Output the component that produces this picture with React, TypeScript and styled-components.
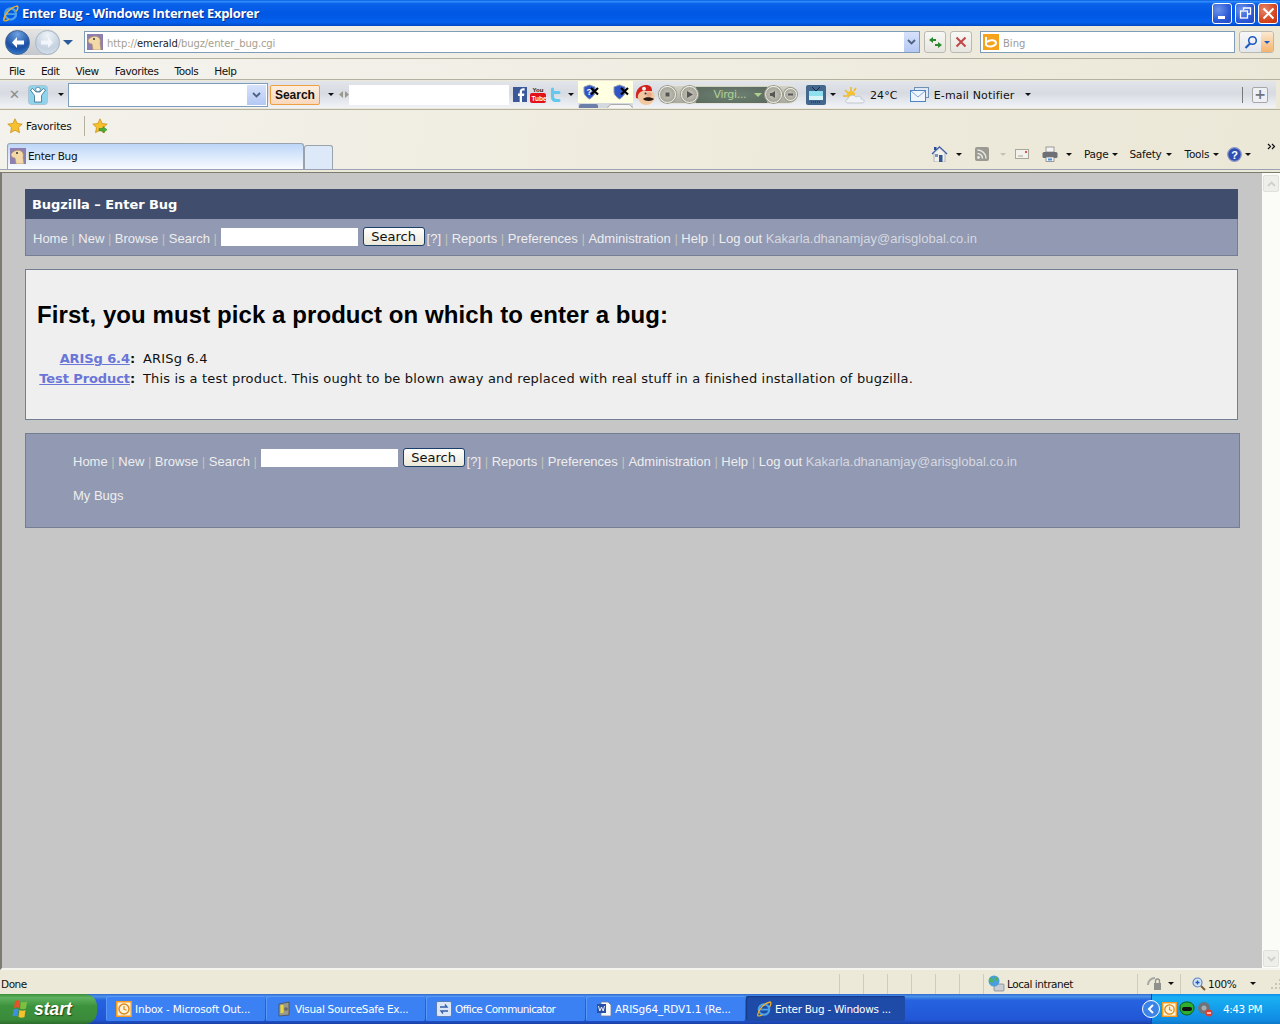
import styled, { createGlobalStyle } from "styled-components";

const GlobalStyle = createGlobalStyle`
  html, body {
    margin: 0;
    padding: 0;
    width: 1280px;
    height: 1024px;
    overflow: hidden;
    background: #c6c6c6;
    font-family: "DejaVu Sans", sans-serif;
  }
`;

const Frame = styled.div`
  width: 1280px;
  height: 1024px;
  display: flex;
  flex-direction: column;
  overflow: hidden;
`;

/* ---------- title bar ---------- */

const TitleBar = styled.div`
  height: 26px;
  flex: none;
  display: flex;
  align-items: center;
  padding: 0 1px 0 2px;
  background: linear-gradient(180deg, #0a5be0 0%, #2f8dfb 6%, #0a62ea 14%, #0057e3 55%, #0461ee 85%, #0049c4 100%);
  color: #fff;
`;

const TitleText = styled.span`
  margin-left: 3px;
  font: bold 13px/26px "Open Sans", "DejaVu Sans", sans-serif;
  letter-spacing: -0.3px;
  text-shadow: 1px 1px 0 #0a2f8c;
  flex: 1;
`;

const WinButton = styled.div<{ $close?: boolean }>`
  width: 18px;
  height: 19px;
  margin-left: 3px;
  margin-right: ${(p) => (p.$close ? "1px" : "0")};
  border: 1px solid #fff;
  border-radius: 3px;
  background: ${(p) =>
    p.$close
      ? "radial-gradient(circle at 30% 30%, #e5866b, #d4471f 60%, #c23010)"
      : "radial-gradient(circle at 30% 30%, #6c93ea, #2c5ad8 60%, #2349c0)"};
  display: flex;
  align-items: center;
  justify-content: center;
`;

/* ---------- address row ---------- */

const AddressRow = styled.div`
  height: 33px;
  flex: none;
  display: flex;
  align-items: center;
  padding-left: 5px;
  background: linear-gradient(90deg, #f3f2ec, #ece8d8);
  border-bottom: 1px solid #b5b1a0;
  box-sizing: border-box;
`;

const NavPill = styled.div`
  width: 55px;
  height: 26px;
  border-radius: 13px;
  background: linear-gradient(180deg, #e4e4e4, #c4c8cc);
  display: flex;
  align-items: center;
  justify-content: space-between;
`;

const RoundNav = styled.div<{ $off?: boolean }>`
  width: 25px;
  height: 25px;
  border-radius: 50%;
  border: 1px solid ${(p) => (p.$off ? "#a9b6c4" : "#47648f")};
  box-sizing: border-box;
  background: ${(p) =>
    p.$off
      ? "radial-gradient(circle at 50% 20%, #eef3f8, #c5d2e0 60%, #dde6ef)"
      : "radial-gradient(circle at 50% 15%, #6ea4e2, #1a4fa5 60%, #3c8ddc)"};
  display: flex;
  align-items: center;
  justify-content: center;
`;

const HistoryCaret = styled.span`
  flex: none;
  margin-left: 3px;
  width: 0;
  height: 0;
  border-left: 5px solid transparent;
  border-right: 5px solid transparent;
  border-top: 5px solid #2a5a9a;
`;

const AddressBox = styled.div`
  margin-left: 11px;
  width: 836px;
  height: 22px;
  box-sizing: border-box;
  border: 1px solid #7f9db9;
  background: #fff;
  display: flex;
  align-items: center;
  font: 10px "DejaVu Sans", sans-serif;
  color: #a5a08e;
  letter-spacing: -0.1px;
`;

const UrlText = styled.span`
  margin-left: 4px;
  padding-top: 2px;
  flex: 1;
  b {
    font-weight: normal;
    color: #222;
  }
`;

const ComboButton = styled.div<{ $wide?: boolean }>`
  width: ${(p) => (p.$wide ? "19px" : "15px")};
  height: 20px;
  background: linear-gradient(180deg, #d7e2fb, #b4c8f3);
  display: flex;
  align-items: center;
  justify-content: center;
  flex: none;
`;

const SmallTool = styled.div`
  margin-left: 4px;
  width: 20px;
  height: 20px;
  flex: none;
  border: 1px solid #b9b9b4;
  border-radius: 3px;
  background: linear-gradient(180deg, #f8f8f5, #e6e5df);
  display: flex;
  align-items: center;
  justify-content: center;
`;

const SearchBox = styled(AddressBox)`
  margin-left: 8px;
  width: 255px;
  color: #9a9a9a;
  letter-spacing: 0;
`;

const BingLabel = styled.span`
  padding-top: 2px;
`;

const BingTile = styled.div`
  width: 16px;
  height: 16px;
  margin-left: 2px;
  margin-right: 4px;
  background: #f7a21b;
  display: flex;
  align-items: center;
  justify-content: center;
`;

const GoPair = styled.div`
  margin-left: 4px;
  width: 33px;
  height: 20px;
  flex: none;
  border: 1px solid #b9b9b4;
  border-radius: 3px;
  display: flex;
  overflow: hidden;
`;

const GoPart = styled.div<{ $drop?: boolean }>`
  width: ${(p) => (p.$drop ? "12px" : "21px")};
  background: ${(p) =>
    p.$drop
      ? "linear-gradient(180deg, #fbe9d2, #f5b36c)"
      : "linear-gradient(180deg, #f8f8f8, #e3e6ec)"};
  display: flex;
  align-items: center;
  justify-content: center;
`;

const BlueCaret = styled.span`
  width: 0;
  height: 0;
  border-left: 3px solid transparent;
  border-right: 3px solid transparent;
  border-top: 3px solid #1f5ac2;
`;

/* ---------- menu and links ---------- */

const MenuRow = styled.div`
  height: 21px;
  flex: none;
  display: flex;
  align-items: center;
  padding: 3px 0 0 9px;
  gap: 16px;
  font: 10.5px "DejaVu Sans", sans-serif;
  letter-spacing: -0.42px;
  color: #111;
  background: linear-gradient(90deg, #f4f3ee, #ece8d8);
  border-bottom: 1px solid #b5b1a0;
  box-sizing: border-box;
`;

const LinksRow = styled.div`
  height: 30px;
  flex: none;
  box-sizing: border-box;
  padding: 1px 0;
  background: #ece9d8;
  border-bottom: 1px solid #b5b1a0;
`;

const LinksInner = styled.div`
  height: 27px;
  width: 1276px;
  display: flex;
  align-items: center;
  background: linear-gradient(180deg, #e2e5ea, #d7dbe1 45%, #f1f3f7);
  font: 11px "DejaVu Sans", sans-serif;
  color: #111;
`;

const Caret = styled.span<{ $ml?: number; $pale?: boolean }>`
  flex: none;
  display: inline-block;
  margin-left: ${(p) => p.$ml ?? 0}px;
  width: 0;
  height: 0;
  border-left: 3px solid transparent;
  border-right: 3px solid transparent;
  border-top: 3px solid ${(p) => (p.$pale ? "#c4c2b8" : "#111")};
`;

const GreenCaret = styled.span`
  flex: none;
  width: 0;
  height: 0;
  border-left: 4px solid transparent;
  border-right: 4px solid transparent;
  border-top: 4px solid #b0d090;
`;

const CloseMark = styled.span`
  margin-left: 9px;
  font: bold 13px "DejaVu Sans", sans-serif;
  color: #8a8a8a;
`;

const IconSlot = styled.div<{ $ml: number }>`
  flex: none;
  margin-left: ${(p) => p.$ml}px;
  display: flex;
`;

const ToolInput = styled.div`
  margin-left: 4px;
  width: 200px;
  height: 24px;
  flex: none;
  box-sizing: border-box;
  border: 1px solid #7f9db9;
  background: #fff;
  display: flex;
  justify-content: flex-end;
  align-items: center;
  padding-right: 1px;
`;

const OrangeSearch = styled.div`
  margin-left: 2px;
  width: 50px;
  height: 20px;
  flex: none;
  box-sizing: border-box;
  border: 1px solid #f0a040;
  border-radius: 2px;
  background: linear-gradient(180deg, #fdeee0, #f9d8bd);
  font: bold 12px/18px "Liberation Sans", sans-serif;
  text-align: center;
  color: #111;
`;

const BlankField = styled.div`
  width: 160px;
  height: 20px;
  flex: none;
  background: #fff;
`;

const PaleBlock = styled.div`
  margin-left: 4px;
  width: 55px;
  height: 27px;
  flex: none;
  display: flex;
  flex-direction: column;
`;

const PaleTop = styled.div`
  height: 22px;
  flex: none;
  background: #ffffe1;
  display: flex;
  align-items: center;
  padding-left: 5px;
  gap: 13px;
`;

const PaleBottom = styled.div`
  flex: 1;
  background: #d5d9e0;
  overflow: hidden;
  display: flex;
  padding: 1px 0 0 1px;
  gap: 9px;
`;

const PaleStubBlue = styled.div`
  width: 20px;
  height: 8px;
  background: #6b7fa8;
  border-radius: 2px;
`;

const PaleStubWhite = styled.div`
  width: 24px;
  height: 8px;
  background: #f6f6f6;
  border: 1px solid #aaa;
  border-radius: 5px;
`;

const Player = styled.div`
  margin-left: 3px;
  width: 140px;
  height: 19px;
  flex: none;
  border-radius: 10px;
  background: linear-gradient(180deg, #d2d3c8, #a9aa9d);
  border: 1px solid #e4e4dc;
  box-sizing: border-box;
  display: flex;
  align-items: center;
  font: 11px "DejaVu Sans", sans-serif;
  color: #b0d090;
`;

const PlayerKnob = styled.div<{ $ml?: number; $small?: boolean }>`
  flex: none;
  z-index: 1;
  margin-left: ${(p) => p.$ml ?? 0}px;
  width: ${(p) => (p.$small ? 13 : 17)}px;
  height: ${(p) => (p.$small ? 13 : 17)}px;
  box-sizing: border-box;
  border-radius: 50%;
  border: 1px solid #f2f2ec;
  box-shadow: 0 0 0 1px #9a9a8c;
  background: radial-gradient(circle, #c9c8bb, #96958a);
  display: flex;
  align-items: center;
  justify-content: center;
`;

const PlayerTitle = styled.div`
  flex: none;
  width: 71px;
  height: 16px;
  box-sizing: border-box;
  padding-left: 13px;
  margin: 0 -2px;
  background: radial-gradient(ellipse at center, #6f8174, #5a6a5e);
  display: flex;
  align-items: center;
  justify-content: center;
  line-height: 16px;
  gap: 8px;
  letter-spacing: -0.3px;
`;

const LinkLabel = styled.span<{ $ml: number }>`
  flex: none;
  margin-left: ${(p) => p.$ml}px;
  padding-top: 1px;
  white-space: nowrap;
  letter-spacing: 0.15px;
`;

const Spring = styled.div`
  flex: 1;
`;

const PlusButton = styled.div`
  width: 14px;
  height: 14px;
  margin: 0 8px 0 9px;
  border: 1px solid #a7a7a7;
  border-radius: 2px;
  background: #eef0f4;
  color: #6e7480;
  font: bold 14px/13px "DejaVu Sans", sans-serif;
  text-align: center;
`;

const VRule = styled.div`
  width: 1px;
  height: 16px;
  background: #777;
`;

/* ---------- favorites + tabs ---------- */

const FavArea = styled.div`
  height: 63px;
  flex: none;
  box-sizing: border-box;
  background: linear-gradient(100deg, #f3f2ec, #eeeadb 60%, #ece8d8);
  display: flex;
  flex-direction: column;
`;

const FavRow = styled.div`
  height: 33px;
  flex: none;
  box-sizing: border-box;
  padding: 0 0 2px 7px;
  display: flex;
  align-items: center;
  font: 10.5px "DejaVu Sans", sans-serif;
  letter-spacing: -0.2px;
  color: #111;
`;

const FavLabel = styled.span`
  margin-left: 3px;
`;

const FavRule = styled.div`
  width: 1px;
  height: 20px;
  background: #b5b1a0;
  margin: 0 7px 0 12px;
`;

const TabRow = styled.div`
  height: 26px;
  flex: none;
  display: flex;
  align-items: flex-end;
  padding-left: 7px;
  font: 10.5px "DejaVu Sans", sans-serif;
  letter-spacing: -0.3px;
  color: #111;
`;

const TabFoot = styled.div`
  flex: 1;
  border-top: 1px solid #9aa3b5;
  border-bottom: 1px solid #7d7a70;
  background: #ece9d8;
`;

const Tab = styled.div`
  width: 297px;
  height: 26px;
  flex: none;
  box-sizing: border-box;
  border: 1px solid #9aa3ad;
  border-bottom: 0;
  border-radius: 3px 3px 0 0;
  background: linear-gradient(180deg, #bcd6f8, #dbe9fb 50%, #f9fbff);
  display: flex;
  align-items: center;
  padding: 0 0 2px 2px;
  gap: 2px;
`;

const NewTab = styled.div`
  width: 29px;
  height: 24px;
  flex: none;
  box-sizing: border-box;
  border: 1px solid #9aa3ad;
  border-bottom: 0;
  border-radius: 3px 3px 0 0;
  background: #dde9f8;
`;

const CmdBar = styled.div`
  flex: 1;
  height: 26px;
  display: flex;
  align-items: center;
  padding-bottom: 4px;
  box-sizing: border-box;
  letter-spacing: -0.25px;
`;

const CmdLabel = styled.span<{ $ml: number }>`
  margin-left: ${(p) => p.$ml}px;
  margin-right: 4px;
  white-space: nowrap;
`;

const Chevrons = styled.div`
  flex: none;
  margin-left: 16px;
  margin-bottom: 16px;
  display: flex;
`;

/* ---------- page ---------- */

const Viewport = styled.div`
  height: 797px;
  flex: none;
  display: flex;
  background: #c6c6c6;
  border-left: 2px solid #7d7a70;
  border-bottom: 2px solid #f5f4ee;
  box-sizing: border-box;
`;

const Page = styled.div`
  flex: 1;
  padding: 16px 0 0 23px;
  font: 13px "Liberation Sans", sans-serif;
`;

const Banner = styled.div`
  width: 1213px;
  height: 30px;
  box-sizing: border-box;
  background: #404d6c;
  color: #fff;
  padding-left: 7px;
  font: bold 13px/31px "DejaVu Sans", sans-serif;
  letter-spacing: -0.05px;
`;

const NavBox = styled.div`
  width: 1213px;
  height: 37px;
  box-sizing: border-box;
  background: #9199b3;
  border: solid #747e93;
  border-width: 0 1px 1px 1px;
  padding: 8px 0 0 7px;
  white-space: nowrap;
  color: #eee;
`;

const NavText = styled.span`
  color: #eee;
`;

const Sep = styled.span`
  color: #c0c4b8;
  margin: 0 3.6px;
`;

const QuickInput = styled.span<{ $drop: number }>`
  display: inline-block;
  width: 137px;
  height: 18px;
  background: #fff;
  vertical-align: ${(p) => -p.$drop}px;
`;

const QuickButton = styled.span<{ $drop: number }>`
  display: inline-block;
  overflow: hidden;
  width: 62px;
  height: 19px;
  box-sizing: border-box;
  margin-left: 5px;
  margin-right: 2px;
  border: 1px solid #1c3f68;
  border-radius: 3px;
  background: linear-gradient(180deg, #fff, #ece9d8);
  color: #111;
  font: 13px/18px "DejaVu Sans", sans-serif;
  text-align: center;
  vertical-align: ${(p) => -p.$drop}px;
`;

const Mail = styled.span`
  color: #d6d8df;
`;

const ContentBox = styled.div`
  width: 1213px;
  height: 151px;
  margin-top: 13px;
  box-sizing: border-box;
  background: #efefef;
  border: 1px solid #747e93;
  padding: 30px 0 0 11px;
`;

const Heading = styled.h2`
  margin: 0;
  font: bold 24px/30px "Liberation Sans", sans-serif;
  letter-spacing: 0.08px;
  color: #000;
`;

const ProductList = styled.div`
  margin-top: 19px;
  display: grid;
  grid-template-columns: 97px auto;
  column-gap: 8px;
  justify-content: start;
  margin-left: 1px;
  font: 13px/20px "DejaVu Sans", sans-serif;
  color: #111;
`;

const ProductName = styled.div`
  font-weight: bold;
  text-align: right;
  white-space: nowrap;
  letter-spacing: -0.1px;
`;

const ProductText = styled.div`
  letter-spacing: 0.17px;
  white-space: nowrap;
`;

const ProductLink = styled.a`
  color: #6a75d8;
  text-decoration: underline;
`;

const FooterBox = styled.div`
  width: 1215px;
  height: 95px;
  margin-top: 13px;
  box-sizing: border-box;
  background: #9199b3;
  border: 1px solid #747e93;
  padding: 14px 0 0 47px;
  white-space: nowrap;
  color: #eee;
`;

const FooterLine = styled.div`
  height: 26px;
`;

const MyBugs = styled.div`
  margin-top: 14px;
  line-height: 16px;
  color: #eee;
`;

const Scrollbar = styled.div`
  width: 18px;
  flex: none;
  background: #fbfbf8;
  display: flex;
  flex-direction: column;
  justify-content: space-between;
`;

const ScrollButton = styled.div`
  height: 15px;
  margin: 2px 1px 1px;
  border: 1px solid #e0e0dc;
  border-radius: 2px;
  background: #eeeeea;
  display: flex;
  align-items: center;
  justify-content: center;
`;

/* ---------- status + taskbar ---------- */

const StatusBar = styled.div`
  height: 24px;
  flex: none;
  box-sizing: border-box;
  display: flex;
  align-items: center;
  background: #ece9d8;
  font: 10.5px "DejaVu Sans", sans-serif;
  letter-spacing: -0.45px;
  color: #111;
  padding: 3px 0 0 1px;
`;

const StatusCell = styled.div<{ $w: number }>`
  flex: none;
  width: ${(p) => p.$w}px;
  height: 20px;
  box-sizing: border-box;
  border-left: 1px solid #cfccbb;
  display: flex;
  align-items: center;
  gap: 2px;
`;

const StatusDone = styled.div`
  width: 838px;
  flex: none;
`;

const Taskbar = styled.div`
  flex: 1;
  display: flex;
  align-items: stretch;
  background: linear-gradient(180deg, #3168d5 0, #4993e6 8%, #2663e0 20%, #2157d7 85%, #1941a5 100%);
  font: 10.5px "DejaVu Sans", sans-serif;
  color: #fff;
`;

const StartButton = styled.div`
  width: 97px;
  flex: none;
  box-sizing: border-box;
  padding-left: 11px;
  border-radius: 0 12px 12px 0;
  background: linear-gradient(180deg, #388e38 0, #5fb15f 12%, #3d933d 40%, #3a8a3a 85%, #2c6c2c 100%);
  display: flex;
  align-items: center;
  gap: 5px;
  font: italic bold 17.5px "Liberation Sans", sans-serif;
  text-shadow: 1px 1px 1px #1b4d1b;
`;

const TaskList = styled.div`
  flex: 1;
  display: flex;
  padding: 2px 0 2px 9px;
  gap: 1px;
`;

const TaskButton = styled.div<{ $active?: boolean; $ls?: number }>`
  width: 159px;
  height: 25px;
  flex: none;
  box-sizing: border-box;
  padding-left: 10px;
  border-radius: 2px;
  letter-spacing: ${(p) => p.$ls ?? -0.17}px;
  background: ${(p) => (p.$active ? "#1e4aa8" : "#3c81f3")};
  box-shadow: ${(p) => (p.$active ? "inset 1px 1px 1px #163a85" : "inset 1px 1px 0 #5a98f5")};
  display: flex;
  align-items: center;
  gap: 3px;
  white-space: nowrap;
`;

const Tray = styled.div`
  width: 129px;
  flex: none;
  box-sizing: border-box;
  background: linear-gradient(180deg, #0f8cea 0, #19b0f2 10%, #0f8ce4 85%, #0d78c8 100%);
  border-left: 1px solid #0a4ea8;
  display: flex;
  align-items: center;
  gap: 2px;
`;

const Clock = styled.span`
  margin-left: 8px;
  letter-spacing: -0.45px;
`;

const TrayArrow = styled.div`
  margin-left: -10px;
  width: 18px;
  height: 18px;
  flex: none;
  border-radius: 50%;
  border: 1px solid #fff;
  box-sizing: border-box;
  background: #3b83e6;
  display: flex;
  align-items: center;
  justify-content: center;
`;

/* ---------- drawings ---------- */

const IeLogo = ({ s = 16 }: { s?: number }) => (
  <svg width={s} height={s} viewBox="0 0 16 16">
    <ellipse cx="8" cy="8.5" rx="5.2" ry="5.2" fill="none" stroke="#4aa3e8" strokeWidth="2.2" />
    <path d="M4.5 8.6h8" stroke="#4aa3e8" strokeWidth="1.8" />
    <path d="M1.5 14.5C2 9 8 2 14 1c1.5 0 1 3-.5 5" fill="none" stroke="#f2b02c" strokeWidth="1.3" />
    <path d="M1.5 14.5c1 1 3 .3 5-1" fill="none" stroke="#f2b02c" strokeWidth="1.2" />
  </svg>
);

const DinoIcon = ({ s = 16 }: { s?: number }) => (
  <svg width={s} height={s} viewBox="0 0 16 16">
    <rect width="16" height="16" fill="#8f7fb0" />
    <path d="M1 6c2-3 7-5 10-3 2 1 3 4 2 6l1 7H6l-1-6C3 10 1 9 1 6z" fill="#f3d8a8" stroke="#a98c5f" strokeWidth="0.6" />
    <circle cx="7" cy="5" r="1" fill="#333" />
  </svg>
);

const ArrowIcon = ({ color, flip }: { color: string; flip?: boolean }) => (
  <svg width="15" height="13" viewBox="0 0 15 13">
    <path d={flip ? "M8 1l5 5.500L8 12V8.500H1v-4h7z" : "M7 1 2 6.500 7 12V8.500h7v-4H7z"} fill={color} />
  </svg>
);

const Chevron = ({ color = "#4d6185" }: { color?: string }) => (
  <svg width="9" height="6" viewBox="0 0 9 6">
    <path d="M1 1l3.500 3.500L8 1" fill="none" stroke={color} strokeWidth="1.8" />
  </svg>
);

const ChevronUp = ({ color }: { color: string }) => (
  <svg width="9" height="6" viewBox="0 0 9 6">
    <path d="M1 5l3.500-3.500L8 5" fill="none" stroke={color} strokeWidth="1.8" />
  </svg>
);

const Star = ({ arrow }: { arrow?: boolean }) => (
  <svg width="16" height="16" viewBox="0 0 16 16">
    <path d="M8 .8l2.200 4.700 5 .6-3.700 3.500 1 5.100L8 12.200l-4.500 2.500 1-5.100L.8 6.100l5-.6z" fill="#f6c02e" stroke="#c88a12" strokeWidth="0.7" />
    {arrow && <path d="M7 10.500h4V8.500l4 3.200-4 3.200v-2H7z" fill="#49b23a" stroke="#2b7d22" strokeWidth="0.5" />}
  </svg>
);

const ShieldX = ({ q }: { q?: boolean }) => (
  <svg width="17" height="17" viewBox="0 0 17 17">
    <path d="M1 3l5.500-2L12 3v5c0 3-3 5.500-5.500 7C4 13.500 1 11 1 8z" fill="#2f56c6" stroke="#8c97b4" strokeWidth="1" />
    {q && <text x="3.500" y="11" fontSize="9" fontWeight="bold" fill="#fff" fontFamily="Liberation Sans">?</text>}
    <path d="M8 4l7 6.500M15 4l-7 6.500" stroke="#000" strokeWidth="2.200" />
  </svg>
);

const Mario = () => (
  <svg width="20" height="20" viewBox="0 0 20 20">
    <path d="M1 13C0 5 5 0 11 0c4 0 6 2 6 6l-9 1-3 7z" fill="#d3211d" />
    <circle cx="9" cy="3.800" r="2" fill="#f2f2f2" />
    <path d="M3 13c-1-3 2-7 5-7h8c3 1 4 4 3.500 7-.7 4-4 7-8.500 7-4 0-7-3-8-7z" fill="#f2c8a0" />
    <path d="M8 14c2-2.500 8-2.500 11 0-2 2.500-9 2.500-11 0z" fill="#2b1a10" />
    <ellipse cx="14" cy="9.500" rx="2.700" ry="2.200" fill="#e8a888" />
    <circle cx="10.500" cy="8.500" r="1" fill="#203050" />
  </svg>
);

const Dim = ({ d, fill = "#555" }: { d: string; fill?: string }) => (
  <svg width="9" height="9" viewBox="0 0 9 9">
    <path d={d} fill={fill} />
  </svg>
);

const TvIcon = () => (
  <svg width="20" height="20" viewBox="0 0 20 20">
    <rect width="20" height="20" rx="2" fill="#44688d" />
    <path d="M6 2l4 4 4-4" fill="none" stroke="#12283f" strokeWidth="1" />
    <rect x="3" y="6" width="14" height="9" fill="#8fe0ee" />
    <rect x="3" y="11" width="14" height="4" fill="#d6f4f7" />
    <path d="M5 17h10" stroke="#12283f" strokeDasharray="1 1" />
  </svg>
);

const Weather = () => (
  <svg width="23" height="18" viewBox="0 0 23 18">
    <g stroke="#f2b61e" strokeWidth="1.400">
      <path d="M8 1v4M2 4l3 3M0 10h4M13 2l-2 3" />
    </g>
    <circle cx="8" cy="9" r="4" fill="#f7c12b" />
    <path d="M5 17c-3 0-3-4 0-4 0-4 6-5 8-2 3-2 6 0 5 2 4 0 4 4 1 4z" fill="#eef2f6" stroke="#b7bec8" strokeWidth="0.8" />
  </svg>
);

const MailIcon = () => (
  <svg width="19" height="15" viewBox="0 0 19 15">
    <rect x="4.500" y="0.500" width="14" height="10" fill="#dfe9f6" stroke="#6f8fb3" />
    <rect x="0.500" y="3.500" width="15" height="11" fill="#eef5fc" stroke="#4e84c2" />
    <path d="M1 4l7 6 7-6" fill="none" stroke="#7fa8d6" />
  </svg>
);

const HomeIcon = () => (
  <svg width="17" height="16" viewBox="0 0 17 16">
    <path d="M1 8l7.500-7L16 8" fill="none" stroke="#3b5fa8" strokeWidth="1.500" />
    <path d="M3 7l5.500-5L14 7v9H3z" fill="#f1f1ea" stroke="#8b95a8" strokeWidth="0.6" />
    <rect x="8" y="9" width="3.500" height="7" fill="#35568f" />
    <rect x="4" y="8" width="3" height="3" fill="#7a94c0" />
    <rect x="3" y="1" width="2.500" height="3" fill="#2d4a9a" />
  </svg>
);

const RssIcon = () => (
  <svg width="14" height="14" viewBox="0 0 14 14">
    <rect width="14" height="14" rx="2" fill="#9a9a92" />
    <circle cx="3.500" cy="10.500" r="1.400" fill="#e8e8e4" />
    <path d="M2.500 6.500a5 5 0 0 1 5 5M2.500 3a8.500 8.500 0 0 1 8.500 8.500" fill="none" stroke="#e8e8e4" strokeWidth="1.500" />
  </svg>
);

const Envelope = () => (
  <svg width="14" height="10" viewBox="0 0 14 10">
    <rect x="0.500" y="0.500" width="13" height="9" fill="#f2f1ec" stroke="#a8a69c" />
    <rect x="10" y="2" width="2" height="2" fill="#d9534f" />
    <path d="M3 7h5" stroke="#a8a69c" />
  </svg>
);

const Printer = () => (
  <svg width="16" height="16" viewBox="0 0 16 16">
    <rect x="4" y="1" width="8" height="5" fill="#f4f4f4" stroke="#777" strokeWidth="0.7" />
    <rect x="0.500" y="6" width="15" height="6" rx="1.500" fill="#6c6f75" />
    <rect x="4" y="11" width="8" height="4.500" fill="#f4f4f4" stroke="#777" strokeWidth="0.7" />
    <rect x="6" y="12.500" width="4" height="2" fill="#4a90d9" />
  </svg>
);

const HelpIcon = () => (
  <svg width="15" height="15" viewBox="0 0 15 15">
    <circle cx="7.500" cy="7.500" r="6.800" fill="#2f4fb5" stroke="#8b98c2" strokeWidth="1.200" />
    <text x="7.500" y="11.500" textAnchor="middle" fontSize="11" fontWeight="bold" fill="#fff" fontFamily="Liberation Sans">?</text>
  </svg>
);

const WinFlag = () => (
  <svg width="18" height="18" viewBox="0 0 18 18">
    <path d="M4 1c2-1 3-1 5 0L8 8C6 7 5 7 3 8z" fill="#e8502a" />
    <path d="M10 1.500c2 1 3 1 6 0l-1 7c-2 1-4 1-6 0z" fill="#7fbf3f" />
    <path d="M2.500 9.500c2-1 3-1 5 0l-1 7c-2-1-3-1-5 0z" fill="#3f8fe0" />
    <path d="M8.500 10c2 1 4 1 6 0l-1 7c-2 1-4 1-6 0z" fill="#f6c02e" />
  </svg>
);

const OutlookIcon = ({ s = 16 }: { s?: number }) => (
  <svg width={s} height={s} viewBox="0 0 16 16">
    <rect width="16" height="16" fill="#f39a1f" />
    <rect x="1.500" y="1.500" width="13" height="13" fill="#fdf3d8" />
    <circle cx="8" cy="8" r="5" fill="none" stroke="#d98a1c" strokeWidth="1.400" />
    <path d="M8 5v3.200l2.500 1" fill="none" stroke="#d98a1c" strokeWidth="1.200" />
  </svg>
);

const SafeIcon = () => (
  <svg width="16" height="16" viewBox="0 0 16 16">
    <path d="M3 3l10-2v13L3 15z" fill="#9a9a8c" stroke="#444" strokeWidth="0.7" />
    <rect x="4.500" y="4" width="3" height="8" fill="#e8d83c" />
    <circle cx="10" cy="8" r="1.800" fill="#666" />
  </svg>
);

const CommIcon = () => (
  <svg width="16" height="16" viewBox="0 0 16 16">
    <rect x="0.500" y="0.500" width="15" height="15" rx="1.500" fill="#dbe6f6" stroke="#5e7fb8" />
    <path d="M4 6h7l-2-2.500M12 10H5l2 2.500" fill="none" stroke="#345ea8" strokeWidth="1.300" />
  </svg>
);

const WordIcon = () => (
  <svg width="16" height="16" viewBox="0 0 16 16">
    <path d="M5 1h7l3 3v11H5z" fill="#f7f9fc" stroke="#6d7d95" strokeWidth="0.8" />
    <rect x="1" y="3" width="9" height="9" fill="#2b4fa3" />
    <path d="M2.500 5l1.300 5L5.500 6l1.700 4 1.300-5" fill="none" stroke="#fff" strokeWidth="0.9" />
  </svg>
);

const GlobeIcon = () => (
  <svg width="18" height="17" viewBox="0 0 18 17">
    <rect x="7" y="9" width="10" height="7" rx="1" fill="#c9ccd2" stroke="#666d78" strokeWidth="0.6" />
    <circle cx="7" cy="6" r="5.500" fill="#4a9ede" />
    <path d="M3 3c2 0 3 1 3 3s-2 2-3 1zM8 1c2 1 3 3 2 5-2 0-3-2-2-5z" fill="#4fb54f" />
  </svg>
);

const MiniLock = () => (
  <svg width="17" height="15" viewBox="0 0 17 15">
    <path d="M1 9c0-4 3-7 7-7" fill="none" stroke="#a7a9a4" strokeWidth="2" />
    <rect x="7" y="7" width="7" height="7" fill="#8f918c" />
    <path d="M8.500 7V5a2 2 0 0 1 4 0v2" fill="none" stroke="#8f918c" strokeWidth="1.300" />
  </svg>
);

const ZoomIcon = () => (
  <svg width="14" height="14" viewBox="0 0 14 14">
    <circle cx="5.500" cy="5.500" r="4.500" fill="#cfe3fa" stroke="#5f86c2" strokeWidth="1.200" />
    <path d="M3.500 5.500h4M5.500 3.500v4" stroke="#2356b6" strokeWidth="1.300" />
    <path d="M9 9l4 4" stroke="#7a5b2c" strokeWidth="2" />
  </svg>
);

const Grip = () => (
  <svg width="11" height="11" viewBox="0 0 11 11">
    <path d="M8 1h2v2H8zM4 5h2v2H4zM8 5h2v2H8zM0 9h2v2H0zM4 9h2v2H4zM8 9h2v2H8z" fill="#c8c5b4" />
  </svg>
);

const NavLinks = ({ drop }: { drop: number }) => (
  <>
    <NavText>Home</NavText><Sep>|</Sep>
    <NavText>New</NavText><Sep>|</Sep>
    <NavText>Browse</NavText><Sep>|</Sep>
    <NavText>Search</NavText><Sep>|</Sep>
    <QuickInput $drop={drop} />
    <QuickButton $drop={drop}>Search</QuickButton>
    <NavText>[?]</NavText><Sep>|</Sep>
    <NavText>Reports</NavText><Sep>|</Sep>
    <NavText>Preferences</NavText><Sep>|</Sep>
    <NavText>Administration</NavText><Sep>|</Sep>
    <NavText>Help</NavText><Sep>|</Sep>
    <NavText>Log out</NavText> <Mail>Kakarla.dhanamjay@arisglobal.co.in</Mail>
  </>
);

export default function App() {
  return (
    <Frame>
      <GlobalStyle />

      <TitleBar>
        <IeLogo s={17} />
        <TitleText>Enter Bug - Windows Internet Explorer</TitleText>
        <WinButton>
          <svg width="11" height="11" viewBox="0 0 11 11"><rect x="1" y="8" width="7" height="3" fill="#fff" /></svg>
        </WinButton>
        <WinButton>
          <svg width="13" height="13" viewBox="0 0 13 13">
            <path d="M4.500 3V1h7v6H9" fill="none" stroke="#fff" strokeWidth="1.300" />
            <rect x="1.500" y="4" width="7" height="7" fill="none" stroke="#fff" strokeWidth="1.300" />
          </svg>
        </WinButton>
        <WinButton $close>
          <svg width="13" height="13" viewBox="0 0 13 13"><path d="M1.500 1.500l10 10M11.500 1.500l-10 10" stroke="#fff" strokeWidth="2" /></svg>
        </WinButton>
      </TitleBar>

      <AddressRow>
        <NavPill>
          <RoundNav><ArrowIcon color="#fff" /></RoundNav>
          <RoundNav $off><ArrowIcon color="#f2f6fb" flip /></RoundNav>
        </NavPill>
        <HistoryCaret />
        <AddressBox>
          <IconSlot $ml={2}><DinoIcon /></IconSlot>
          <UrlText>http://<b>emerald</b>/bugz/enter_bug.cgi</UrlText>
          <ComboButton><Chevron /></ComboButton>
        </AddressBox>
        <SmallTool>
          <svg width="15" height="13" viewBox="0 0 15 13">
            <path d="M1 4l4-3v2h3v2H5v2zM14 9l-4 3v-2H7V8h3V6z" fill="#2c8a2c" />
          </svg>
        </SmallTool>
        <SmallTool>
          <svg width="12" height="12" viewBox="0 0 12 12"><path d="M1.500 1.500l9 9M10.500 1.500l-9 9" stroke="#c2474a" strokeWidth="2" /></svg>
        </SmallTool>
        <SearchBox>
          <BingTile>
            <svg width="14" height="12" viewBox="0 0 14 12">
              <path d="M2 1v8c3 3 10 1 10-2S6 3 3 6" fill="none" stroke="#fff" strokeWidth="2" />
            </svg>
          </BingTile>
          <BingLabel>Bing</BingLabel>
        </SearchBox>
        <GoPair>
          <GoPart>
            <svg width="14" height="14" viewBox="0 0 14 14">
              <circle cx="8.500" cy="5.500" r="3.800" fill="none" stroke="#1f5ac2" strokeWidth="1.600" />
              <path d="M6 8.500L1.500 13" stroke="#1f5ac2" strokeWidth="2.200" />
            </svg>
          </GoPart>
          <GoPart $drop><BlueCaret /></GoPart>
        </GoPair>
      </AddressRow>

      <MenuRow>
        <span>File</span><span>Edit</span><span>View</span><span>Favorites</span><span>Tools</span><span>Help</span>
      </MenuRow>

      <LinksRow>
        <LinksInner>
          <CloseMark>✕</CloseMark>
          <IconSlot $ml={8}>
            <svg width="20" height="20" viewBox="0 0 20 20">
              <rect x="0.500" y="0.500" width="19" height="19" rx="3" fill="#8fd4ec" stroke="#a9c4d2" />
              <circle cx="10" cy="4.500" r="2.300" fill="#fff" stroke="#2a5a7a" strokeWidth="0.6" />
              <path d="M2.500 5l2-1.500L8 7h4l3.500-3.500 2 1.500-4 5.500V17H6.500v-6.500z" fill="#fff" stroke="#2a5a7a" strokeWidth="0.7" />
            </svg>
          </IconSlot>
          <Caret $ml={10} />
          <ToolInput>
            <ComboButton $wide><Chevron /></ComboButton>
          </ToolInput>
          <OrangeSearch>Search</OrangeSearch>
          <Caret $ml={8} />
          <svg width="10" height="13" viewBox="0 0 10 13" style={{ marginLeft: 5, flex: "none" }}>
            <path d="M0 6.500L4 3v7zM10 6.500L6 3v7z" fill="#9a9a8c" />
          </svg>
          <BlankField />
          <IconSlot $ml={4}>
            <svg width="14" height="15" viewBox="0 0 14 15">
              <rect width="14" height="15" fill="#3b5998" />
              <path d="M9 15V9h2l.4-2.500H9V5c0-1 .4-1.400 1.400-1.400h1.200V1.300C10 1 7 .8 6.700 4.500v2H5V9h1.700v6z" fill="#fff" />
            </svg>
          </IconSlot>
          <IconSlot $ml={3}>
            <svg width="16" height="17" viewBox="0 0 16 17">
              <text x="2.500" y="6" fontSize="6" fontWeight="bold" fill="#222" fontFamily="Liberation Sans">You</text>
              <rect y="7" width="16" height="10" rx="2" fill="#e3101a" />
              <text x="1.500" y="14.500" fontSize="6.500" fontWeight="bold" fill="#fff" fontFamily="Liberation Sans">Tube</text>
            </svg>
          </IconSlot>
          <IconSlot $ml={3}>
            <svg width="13" height="16" viewBox="0 0 13 16">
              <path d="M2 2a1.500 1.500 0 0 1 3 0v2h5a1.500 1.500 0 0 1 0 3H5v2.500C5 11 6 12 7.500 12H10a1.500 1.500 0 0 1 0 3H6.500C4 15 2 13 2 10z" fill="#63c8ee" />
            </svg>
          </IconSlot>
          <Caret $ml={6} />
          <PaleBlock>
            <PaleTop>
              <ShieldX q />
              <ShieldX />
            </PaleTop>
            <PaleBottom>
              <PaleStubBlue />
              <PaleStubWhite />
            </PaleBottom>
          </PaleBlock>
          <IconSlot $ml={2}><Mario /></IconSlot>
          <Player>
            <PlayerKnob><Dim d="M2.500 2.500h4v4h-4z" /></PlayerKnob>
            <PlayerKnob $ml={5}><Dim d="M2 1l6 3.500L2 8z" /></PlayerKnob>
            <PlayerTitle>
              Virgi...
              <GreenCaret />
            </PlayerTitle>
            <PlayerKnob><Dim d="M1 3h2l3-2v7L3 6H1z" /></PlayerKnob>
            <PlayerKnob $ml={2} $small><Dim d="M2 3.500h5v2H2z" /></PlayerKnob>
          </Player>
          <IconSlot $ml={8}><TvIcon /></IconSlot>
          <Caret $ml={4} />
          <IconSlot $ml={7}><Weather /></IconSlot>
          <LinkLabel $ml={4}>24°C</LinkLabel>
          <IconSlot $ml={12}><MailIcon /></IconSlot>
          <LinkLabel $ml={5}>E-mail Notifier</LinkLabel>
          <Caret $ml={11} />
          <Spring />
          <VRule />
          <PlusButton>+</PlusButton>
        </LinksInner>
      </LinksRow>

      <FavArea>
        <FavRow>
          <Star />
          <FavLabel>Favorites</FavLabel>
          <FavRule />
          <Star arrow />
        </FavRow>
        <TabRow>
          <Tab><DinoIcon />Enter Bug</Tab>
          <NewTab />
          <CmdBar>
            <IconSlot $ml={598}><HomeIcon /></IconSlot>
            <Caret $ml={8} />
            <IconSlot $ml={13}><RssIcon /></IconSlot>
            <Caret $ml={11} $pale />
            <IconSlot $ml={9}><Envelope /></IconSlot>
            <IconSlot $ml={13}><Printer /></IconSlot>
            <Caret $ml={8} />
            <CmdLabel $ml={12}>Page</CmdLabel><Caret />
            <CmdLabel $ml={11}>Safety</CmdLabel><Caret />
            <CmdLabel $ml={13}>Tools</CmdLabel><Caret />
            <IconSlot $ml={8}><HelpIcon /></IconSlot>
            <Caret $ml={3} />
            <Chevrons>
              <svg width="9" height="7" viewBox="0 0 9 7">
                <path d="M1 1l2.500 2.500L1 6M5 1l2.500 2.500L5 6" fill="none" stroke="#111" strokeWidth="1.200" />
              </svg>
            </Chevrons>
          </CmdBar>
        </TabRow>
        <TabFoot />
      </FavArea>

      <Viewport>
        <Page>
          <Banner>Bugzilla – Enter Bug</Banner>
          <NavBox><NavLinks drop={3} /></NavBox>
          <ContentBox>
            <Heading>First, you must pick a product on which to enter a bug:</Heading>
            <ProductList>
              <ProductName><ProductLink>ARISg 6.4</ProductLink>:</ProductName>
              <ProductText>ARISg 6.4</ProductText>
              <ProductName><ProductLink>Test Product</ProductLink>:</ProductName>
              <ProductText>This is a test product. This ought to be blown away and replaced with real stuff in a finished installation of bugzilla.</ProductText>
            </ProductList>
          </ContentBox>
          <FooterBox>
            <FooterLine><NavLinks drop={1} /></FooterLine>
            <MyBugs>My Bugs</MyBugs>
          </FooterBox>
        </Page>
        <Scrollbar>
          <ScrollButton><ChevronUp color="#cfcfcb" /></ScrollButton>
          <ScrollButton><Chevron color="#cfcfcb" /></ScrollButton>
        </Scrollbar>
      </Viewport>

      <StatusBar>
        <StatusDone>Done</StatusDone>
        <StatusCell $w={24} /><StatusCell $w={24} /><StatusCell $w={24} /><StatusCell $w={24} /><StatusCell $w={24} /><StatusCell $w={24} />
        <StatusCell $w={154}><IconSlot $ml={3}><GlobeIcon /></IconSlot>Local intranet</StatusCell>
        <StatusCell $w={43}><IconSlot $ml={9}><MiniLock /></IconSlot><Caret $ml={2} /></StatusCell>
        <StatusCell $w={100}>
          <IconSlot $ml={11}><ZoomIcon /></IconSlot>100%<Caret $ml={12} /><IconSlot $ml={13}><Grip /></IconSlot>
        </StatusCell>
      </StatusBar>

      <Taskbar>
        <StartButton><WinFlag />start</StartButton>
        <TaskList>
          <TaskButton><OutlookIcon />Inbox - Microsoft Out...</TaskButton>
          <TaskButton $ls={-0.3}><SafeIcon />Visual SourceSafe Ex...</TaskButton>
          <TaskButton $ls={-0.6}><CommIcon />Office Communicator</TaskButton>
          <TaskButton><WordIcon />ARISg64_RDV1.1 (Re...</TaskButton>
          <TaskButton $active $ls={-0.3}><IeLogo />Enter Bug - Windows ...</TaskButton>
        </TaskList>
        <Tray>
          <TrayArrow>
            <svg width="8" height="10" viewBox="0 0 8 10"><path d="M6 1L2 5l4 4" fill="none" stroke="#fff" strokeWidth="2" /></svg>
          </TrayArrow>
          <OutlookIcon s={15} />
          <svg width="16" height="16" viewBox="0 0 16 16">
            <path d="M8 1c5 0 7 3 7 6s-3 7-7 7-7-3-7-7 3-6 7-6z" fill="#2fae2f" stroke="#0c5a0c" strokeWidth="1" />
            <rect x="3" y="6" width="10" height="4" rx="2" fill="#111" />
          </svg>
          <svg width="16" height="16" viewBox="0 0 16 16">
            <circle cx="7" cy="7" r="6" fill="#6d7378" />
            <circle cx="7" cy="7" r="2.500" fill="#a8adb2" />
            <circle cx="12" cy="12" r="3.500" fill="#e23b30" />
            <path d="M10 12h4" stroke="#fff" strokeWidth="1.300" />
          </svg>
          <Clock>4:43 PM</Clock>
        </Tray>
      </Taskbar>
    </Frame>
  );
}
